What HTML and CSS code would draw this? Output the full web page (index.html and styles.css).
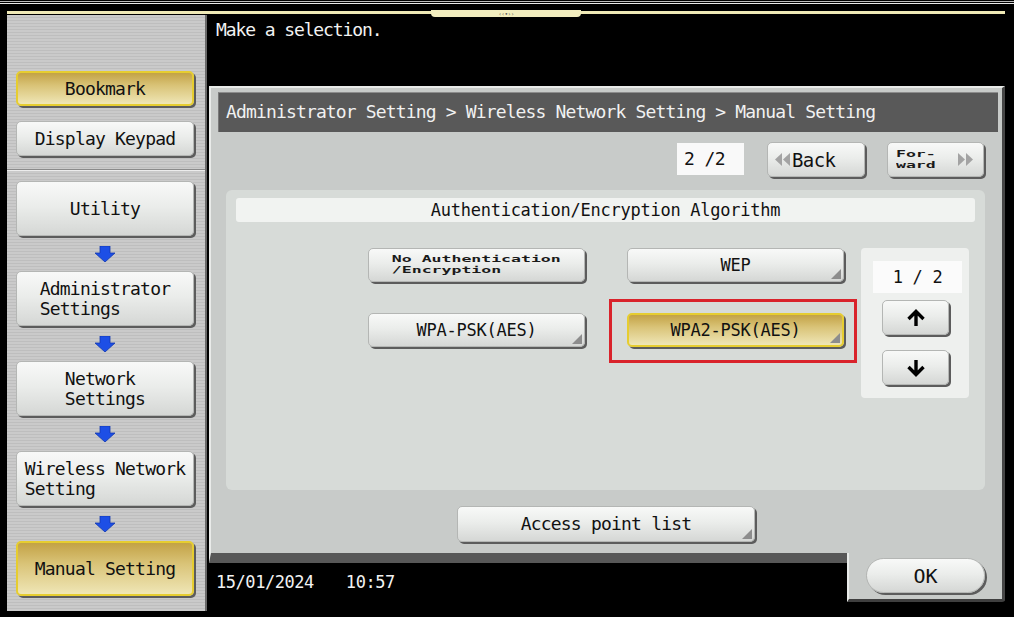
FILE: index.html
```html
<!DOCTYPE html>
<html lang="en">
<head>
<meta charset="utf-8">
<title>Manual Setting</title>
<link rel="stylesheet" href="styles.css">
</head>
<body>
<div class="screen">
  <div class="topline"></div>
  <div class="ybar"><div class="ytab">‹‹•››</div></div>
  <div class="main">
    <aside class="side">
      <div class="side-top">
        <button class="btn sel short">Bookmark</button>
        <button class="btn short">Display Keypad</button>
      </div>
      <div class="side-flow">
        <button class="btn tall"><span>Utility</span></button>
        <div class="flow-arrow"><svg width="20" height="16" viewBox="0 0 20 16"><polygon points="5,0 15,0 15,7 20,7 10,16 0,7 5,7" fill="#1d4fe6" stroke="#1238b0" stroke-width="0.8"/></svg></div>
        <button class="btn tall"><span>Administrator<br>Settings</span></button>
        <div class="flow-arrow"><svg width="20" height="16" viewBox="0 0 20 16"><polygon points="5,0 15,0 15,7 20,7 10,16 0,7 5,7" fill="#1d4fe6" stroke="#1238b0" stroke-width="0.8"/></svg></div>
        <button class="btn tall"><span>Network<br>Settings</span></button>
        <div class="flow-arrow"><svg width="20" height="16" viewBox="0 0 20 16"><polygon points="5,0 15,0 15,7 20,7 10,16 0,7 5,7" fill="#1d4fe6" stroke="#1238b0" stroke-width="0.8"/></svg></div>
        <button class="btn tall"><span>Wireless Network<br>Setting</span></button>
        <div class="flow-arrow"><svg width="20" height="16" viewBox="0 0 20 16"><polygon points="5,0 15,0 15,7 20,7 10,16 0,7 5,7" fill="#1d4fe6" stroke="#1238b0" stroke-width="0.8"/></svg></div>
        <button class="btn tall sel"><span>Manual Setting</span></button>
      </div>
    </aside>
    <section class="work">
      <div class="msg">Make a selection.</div>
      <div class="dialog">
        <div class="crumb">Administrator Setting &gt; Wireless Network Setting &gt; Manual Setting</div>
        <div class="navrow">
          <div class="pagebox">2 /2</div>
          <button class="btn nav back">
            <svg width="15" height="13" viewBox="0 0 15 13"><polygon points="7,0 7,13 0,6.5" fill="#a3a3a3"/><polygon points="15,0 15,13 8,6.5" fill="#a3a3a3"/></svg>
            <span>Back</span>
          </button>
          <button class="btn nav fwd">
            <span class="small"><span class="ln">For-</span><span class="ln">ward</span></span>
            <svg width="15" height="13" viewBox="0 0 15 13"><polygon points="0,0 0,13 7,6.5" fill="#a3a3a3"/><polygon points="8,0 8,13 15,6.5" fill="#a3a3a3"/></svg>
          </button>
        </div>
        <div class="content">
          <div class="title">Authentication/Encryption Algorithm</div>
          <div class="cbody">
            <div class="choices">
              <button class="btn opt"><span class="small"><span class="ln">No Authentication</span><span class="ln">/Encryption</span></span></button>
              <button class="btn opt corner">WEP</button>
              <button class="btn opt corner">WPA-PSK(AES)</button>
              <button class="btn opt corner sel marked">WPA2-PSK(AES)</button>
            </div>
            <div class="pager">
              <div class="pbox">1 / 2</div>
              <button class="btn pbtn up"><svg width="20" height="18" viewBox="0 0 20 18"><path d="M10 17 V3 M2.5 10 L10 2.5 L17.5 10" fill="none" stroke="#000" stroke-width="3.4"/></svg></button>
              <button class="btn pbtn down"><svg width="20" height="18" viewBox="0 0 20 18"><path d="M10 1 V15 M2.5 8 L10 15.5 L17.5 8" fill="none" stroke="#000" stroke-width="3.4"/></svg></button>
            </div>
          </div>
        </div>
        <div class="aprow">
          <button class="btn ap corner">Access point list</button>
        </div>
      </div>
      <div class="foot">
        <div class="clock"><span>15/01/2024</span><span class="time">10:57</span></div>
        <div class="oktab"><button class="btn ok">OK</button></div>
      </div>
    </section>
  </div>
</div>
</body>
</html>
```

FILE: styles.css
```css
html, body {
  margin: 0;
  padding: 0;
  background: #000;
}

.screen {
  width: 1014px;
  height: 617px;
  overflow: hidden;
  background: #000;
  font-family: "DejaVu Sans Mono", "Liberation Mono", monospace;
}

.topline {
  height: 11px;
  background: linear-gradient(#000 0 1px, #bdbdbd 1px 2px, #000 2px 3px, #e8e8e8 3px 4px, #000 4px);
}

.ybar {
  height: 3px;
  margin: 0 9px 1px 7px;
  background: #efe9b6;
  display: flex;
}

.ytab {
  margin: -1px 0 0 424px;
  width: 150px;
  height: 7px;
  background: #f3eebf;
  border-radius: 0 0 4px 4px;
  font-size: 6px;
  line-height: 7px;
  color: #555;
  text-align: center;
  letter-spacing: -0.5px;
}

.main {
  display: flex;
  align-items: flex-start;
  height: 602px;
}

/* ---------- side panel ---------- */
.side {
  margin-left: 7px;
  width: 198px;
  height: 596px;
  border-right: 2px solid #6a6a6a;
  background: repeating-linear-gradient(#cacaca 0 2px, #bebebe 2px 3px);
  display: flex;
  flex-direction: column;
}

.side-top {
  height: 155px;
  box-sizing: border-box;
  padding: 56px 0 0 9px;
  display: flex;
  flex-direction: column;
  gap: 15px;
  border-bottom: 1px solid #8a8a8a;
}

.side-flow {
  border-top: 1px solid #ececec;
  padding: 10px 0 0 9px;
  display: flex;
  flex-direction: column;
}

.flow-arrow {
  width: 178px;
  height: 35px;
  display: flex;
  align-items: center;
  justify-content: center;
}

.flow-arrow svg {
  display: block;
  margin-top: 1px;
}

/* ---------- buttons ---------- */
.btn {
  position: relative;
  box-sizing: border-box;
  margin: 0;
  padding: 0;
  border: 1px solid #b4b6b4;
  border-radius: 5px;
  background: linear-gradient(#f8f9f8, #ebedeb 45%, #d5d7d5);
  box-shadow: 2px 2px 0 #5c5c5c;
  font-family: "DejaVu Sans Mono", "Liberation Mono", monospace;
  font-size: 18px;
  line-height: 20px;
  letter-spacing: -0.8px;
  color: #111;
  display: flex;
  align-items: center;
  justify-content: center;
  text-align: left;
}

.btn.sel {
  border: 2px solid #e6cd30;
  background: linear-gradient(#c3a246, #d9c377 40%, #efe6b6);
}

.btn.corner::after {
  content: "";
  position: absolute;
  right: 2px;
  bottom: 2px;
  width: 0;
  height: 0;
  border-style: solid;
  border-width: 0 0 10px 10px;
  border-color: transparent transparent #8d8d8d transparent;
}

.short {
  width: 178px;
  height: 35px;
}

.tall {
  width: 178px;
  height: 55px;
}

.small {
  display: inline-flex;
  flex-direction: column;
  font-size: 11px;
  font-weight: bold;
  letter-spacing: 0;
  transform: scale(1.5, 0.85);
  color: #1a1a1a;
}

.small .ln {
  display: block;
  height: 13px;
  line-height: 13px;
  white-space: nowrap;
}

/* ---------- work area ---------- */
.work {
  width: 798px;
  display: flex;
  flex-direction: column;
}

.msg {
  height: 71px;
  box-sizing: border-box;
  padding: 5px 0 0 9px;
  color: #f2f2f2;
  font-size: 18px;
  line-height: 20px;
  letter-spacing: -1.1px;
}

.dialog {
  margin-left: 2px;
  height: 477px;
  box-sizing: border-box;
  background: #c8cbc9;
  border-top: 2px solid #e9ebe9;
  border-left: 2px solid #e9ebe9;
  border-right: 3px solid #474747;
  border-bottom: 10px solid #585858;
  padding: 4px 4px 0 7px;
  display: flex;
  flex-direction: column;
}

.crumb {
  height: 40px;
  box-sizing: border-box;
  background: #595959;
  border-top: 1px solid #8c8c8c;
  border-left: 1px solid #7a7a7a;
  color: #f1f1f1;
  padding-left: 7px;
  font-size: 18px;
  line-height: 37px;
  letter-spacing: -0.85px;
}

.navrow {
  margin-top: 10px;
  height: 35px;
  display: flex;
  justify-content: flex-end;
  padding-right: 14px;
}

.pagebox {
  width: 67px;
  height: 32px;
  margin-top: 1px;
  background: #f9f9f9;
  box-sizing: border-box;
  padding-left: 7px;
  font-size: 18px;
  line-height: 32px;
  letter-spacing: -0.6px;
  color: #111;
}

.nav {
  height: 35px;
}

.back {
  width: 98px;
  margin-left: 23px;
  justify-content: flex-start;
  padding-left: 7px;
  gap: 2px;
  font-size: 19px;
  letter-spacing: -0.6px;
}

.back span {
  margin-top: 1px;
}

.fwd {
  width: 97px;
  margin-left: 22px;
  justify-content: space-between;
  padding: 0 10px 0 8px;
}

.fwd .small {
  transform-origin: left center;
  margin-top: 1px;
}

.content {
  margin: 13px 0 0 8px;
  width: 759px;
  height: 300px;
  box-sizing: border-box;
  background: #d7dbd8;
  border-radius: 6px;
  padding: 8px 10px;
}

.title {
  height: 24px;
  background: #f1f3f1;
  border-radius: 3px;
  text-align: center;
  font-size: 17px;
  line-height: 25px;
  letter-spacing: -0.25px;
  color: #111;
}

.cbody {
  display: flex;
  align-items: flex-start;
  margin-top: 26px;
  padding-left: 132px;
}

.choices {
  display: grid;
  grid-template-columns: 217px 217px;
  grid-auto-rows: 34px;
  column-gap: 42px;
  row-gap: 31px;
}

.opt {
  width: 100%;
  height: 34px;
  font-size: 17px;
  letter-spacing: -0.25px;
}

.marked::before {
  content: "";
  position: absolute;
  left: -20px;
  top: -16px;
  right: -15px;
  bottom: -18px;
  border: 3px solid #d9232b;
}

.pager {
  margin-left: 17px;
  width: 108px;
  height: 150px;
  box-sizing: border-box;
  background: #eef0ee;
  border-radius: 4px;
  padding: 13px 0 0 12px;
  display: flex;
  flex-direction: column;
}

.pbox {
  width: 89px;
  height: 32px;
  background: #fbfbfb;
  text-align: center;
  font-size: 17px;
  line-height: 33px;
  letter-spacing: -0.3px;
  color: #111;
}

.pbtn {
  width: 67px;
  height: 35px;
  margin-left: 9px;
}

.up {
  margin-top: 7px;
}

.down {
  margin-top: 15px;
}

.pbtn svg {
  display: block;
}

.aprow {
  margin-top: 16px;
  display: flex;
  justify-content: center;
  padding-right: 4px;
}

.ap {
  width: 298px;
  height: 36px;
  font-size: 18px;
  letter-spacing: -0.8px;
}

/* ---------- footer ---------- */
.foot {
  display: flex;
  height: 50px;
}

.clock {
  padding: 9px 0 0 9px;
  color: #f2f2f2;
  font-size: 17px;
  line-height: 20px;
  letter-spacing: -0.45px;
}

.time {
  margin-left: 32px;
}

.oktab {
  margin: -10px 0 0 auto;
  width: 158px;
  height: 49px;
  box-sizing: border-box;
  background: #c8cbc9;
  border-left: 2px solid #e9ebe9;
  border-right: 3px solid #474747;
  border-bottom: 3px solid #3f3f3f;
  border-bottom-right-radius: 3px;
  padding: 5px 0 0 17px;
}

.ok {
  width: 119px;
  height: 35px;
  border-radius: 18px;
  font-size: 20px;
  letter-spacing: 0;
}
```
